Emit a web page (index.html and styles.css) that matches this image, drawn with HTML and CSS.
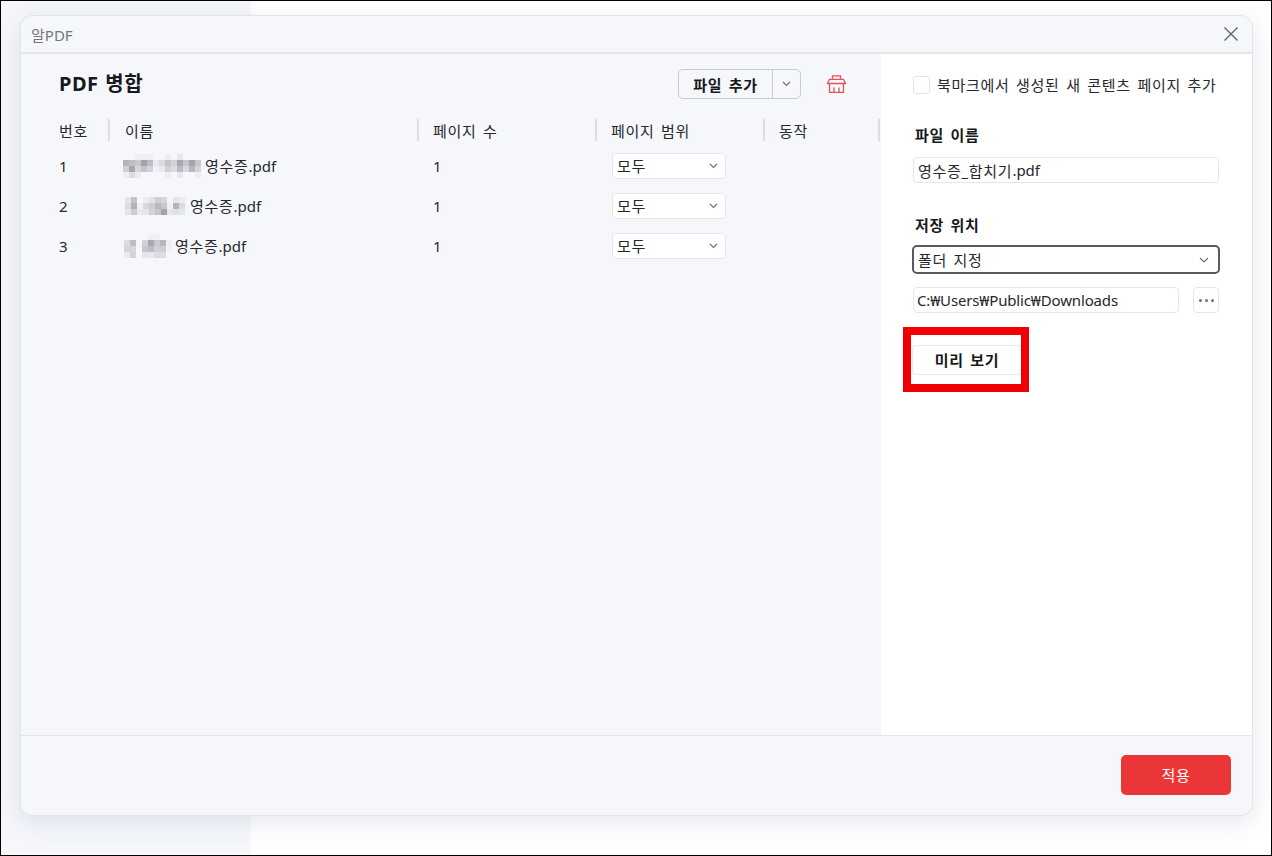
FILE: index.html
```html
<!DOCTYPE html>
<html lang="ko">
<head>
<meta charset="utf-8">
<title>알PDF</title>
<link rel="stylesheet" href="styles.css">
</head>
<body>
<div class="desktop">
  <div class="backdrop-side"></div>
  <div class="backdrop-main"></div>
  <div class="dialog">
    <header class="titlebar">
      <span class="app-name">알PDF</span>
      <svg class="close" width="16" height="16" viewBox="0 0 16 16"><path d="M1.5 1.5l13 13M14.5 1.5l-13 13"/></svg>
    </header>
    <div class="content">
      <section class="left">
        <div class="left-head">
          <h1>PDF 병합</h1>
          <div class="split">
            <button class="split-main ko">파일 추가</button>
            <span class="split-arrow"><svg class="chev" width="9" height="6" viewBox="0 0 9 6"><path d="M1 1l3.5 3.5L8 1"/></svg></span>
          </div>
          <svg class="trash" width="19" height="18" viewBox="0 0 19 18"><path d="M5.500 4.300V.8h8v3.500M2.500 4.300h14l2 4.200H.5zM2.500 8.500v8.800h14V8.500M7 12.500v4.800M12 12.500v4.800"/></svg>
        </div>
        <div class="grid grid-head ko">
          <div class="cell first">번호</div>
          <div class="cell second">이름</div>
          <div class="cell">페이지 수</div>
          <div class="cell">페이지 범위</div>
          <div class="cell">동작</div>
        </div>
        <div class="grid row">
          <div class="cell first">1</div>
          <div class="cell name">
            <svg class="mosaic m1" width="78" height="24" viewBox="0 0 13 4" shape-rendering="crispEdges">
              <rect x="2" y="0" width="3" height="1" fill="#eef0f4"/><rect x="7" y="0" width="1" height="1" fill="#eceef2"/><rect x="9" y="0" width="1" height="1" fill="#e6e8ec"/>
              <rect x="0" y="1" width="1" height="1" fill="#b3b3b8"/><rect x="1" y="1" width="1" height="1" fill="#bdbdc2"/><rect x="2" y="1" width="1" height="1" fill="#c8c8cf"/><rect x="3" y="1" width="1" height="1" fill="#a3a3a9"/><rect x="4" y="1" width="1" height="1" fill="#bcbcc6"/><rect x="5" y="1" width="1" height="1" fill="#e8e8ee"/><rect x="6" y="1" width="1" height="1" fill="#d7dbe2"/><rect x="7" y="1" width="1" height="1" fill="#c4c4cc"/><rect x="8" y="1" width="1" height="1" fill="#d0d0d8"/><rect x="9" y="1" width="1" height="1" fill="#a9a7b5"/><rect x="10" y="1" width="1" height="1" fill="#c6c4cf"/><rect x="11" y="1" width="1" height="1" fill="#a5a5a8"/><rect x="12" y="1" width="1" height="1" fill="#c8c8cc"/>
              <rect x="0" y="2" width="1" height="1" fill="#d0d0d4"/><rect x="1" y="2" width="1" height="1" fill="#a9a9ac"/><rect x="2" y="2" width="1" height="1" fill="#d5d5dc"/><rect x="3" y="2" width="1" height="1" fill="#c5c5cf"/><rect x="4" y="2" width="1" height="1" fill="#d2d2dc"/><rect x="5" y="2" width="1" height="1" fill="#f0f0f5"/><rect x="6" y="2" width="1" height="1" fill="#e8e8ee"/><rect x="7" y="2" width="1" height="1" fill="#cfcfd6"/><rect x="8" y="2" width="1" height="1" fill="#dcdce0"/><rect x="9" y="2" width="1" height="1" fill="#bdbbc5"/><rect x="10" y="2" width="1" height="1" fill="#d8d6de"/><rect x="11" y="2" width="1" height="1" fill="#b8b8bc"/><rect x="12" y="2" width="1" height="1" fill="#d5d5d8"/>
              <rect x="0" y="3" width="1" height="1" fill="#eceef0"/><rect x="1" y="3" width="1" height="1" fill="#dddde0"/><rect x="2" y="3" width="1" height="1" fill="#ebebee"/><rect x="7" y="3" width="1" height="1" fill="#eeeef2"/><rect x="9" y="3" width="1" height="1" fill="#e8e8ec"/><rect x="12" y="3" width="1" height="1" fill="#eeeef0"/>
            </svg>
            <span class="file"><span class="ko">영수증</span>.pdf</span>
          </div>
          <div class="cell">1</div>
          <div class="cell"><div class="mini-select ko"><span>모두</span><svg class="chev" width="9" height="6" viewBox="0 0 9 6"><path d="M1 1l3.500 3.500L8 1"/></svg></div></div>
          <div class="cell"></div>
        </div>
        <div class="grid row">
          <div class="cell first">2</div>
          <div class="cell name">
            <svg class="mosaic m2" width="60" height="18" viewBox="0 0 10 3" shape-rendering="crispEdges">
              <rect x="0" y="0" width="1" height="1" fill="#e4e5e8"/><rect x="1" y="0" width="1" height="1" fill="#c4c4c8"/><rect x="3" y="0" width="1" height="1" fill="#eeeef2"/><rect x="4" y="0" width="1" height="1" fill="#e2e2e6"/><rect x="5" y="0" width="1" height="1" fill="#cfcdd2"/><rect x="6" y="0" width="1" height="1" fill="#d8d6da"/><rect x="8" y="0" width="1" height="1" fill="#e4e6ea"/><rect x="9" y="0" width="1" height="1" fill="#e8ecf0"/>
              <rect x="0" y="1" width="1" height="1" fill="#dcdce0"/><rect x="1" y="1" width="1" height="1" fill="#b2b2b6"/><rect x="2" y="1" width="1" height="1" fill="#eff0f3"/><rect x="3" y="1" width="1" height="1" fill="#d8d8de"/><rect x="4" y="1" width="1" height="1" fill="#cdcdd3"/><rect x="5" y="1" width="1" height="1" fill="#bdb8bc"/><rect x="6" y="1" width="1" height="1" fill="#cac6ca"/><rect x="7" y="1" width="1" height="1" fill="#f0f1f4"/><rect x="8" y="1" width="1" height="1" fill="#b8b5b4"/><rect x="9" y="1" width="1" height="1" fill="#d5dde4"/>
              <rect x="0" y="2" width="1" height="1" fill="#e6e6ea"/><rect x="1" y="2" width="1" height="1" fill="#cdcdd0"/><rect x="2" y="2" width="1" height="1" fill="#eaeaee"/><rect x="3" y="2" width="1" height="1" fill="#e4e6ea"/><rect x="4" y="2" width="1" height="1" fill="#d2d2d8"/><rect x="5" y="2" width="1" height="1" fill="#c6c4cc"/><rect x="6" y="2" width="1" height="1" fill="#a8a2a8"/><rect x="7" y="2" width="1" height="1" fill="#e4e6ea"/><rect x="8" y="2" width="1" height="1" fill="#dee2e6"/><rect x="9" y="2" width="1" height="1" fill="#e4e8ec"/>
            </svg>
            <span class="file"><span class="ko">영수증</span>.pdf</span>
          </div>
          <div class="cell">1</div>
          <div class="cell"><div class="mini-select ko"><span>모두</span><svg class="chev" width="9" height="6" viewBox="0 0 9 6"><path d="M1 1l3.500 3.500L8 1"/></svg></div></div>
          <div class="cell"></div>
        </div>
        <div class="grid row">
          <div class="cell first">3</div>
          <div class="cell name">
            <svg class="mosaic m3" width="48" height="24" viewBox="0 0 8 4" shape-rendering="crispEdges">
              <rect x="4" y="0" width="1" height="1" fill="#eef0f4"/><rect x="5" y="0" width="1" height="1" fill="#f0f1f5"/>
              <rect x="0" y="1" width="1" height="1" fill="#dcdce0"/><rect x="1" y="1" width="1" height="1" fill="#bdbdc2"/><rect x="3" y="1" width="1" height="1" fill="#d0d0d6"/><rect x="4" y="1" width="1" height="1" fill="#a8a8b6"/><rect x="5" y="1" width="1" height="1" fill="#c8c8cf"/><rect x="6" y="1" width="1" height="1" fill="#bcb4ba"/><rect x="7" y="1" width="1" height="1" fill="#eaf0f4"/>
              <rect x="0" y="2" width="1" height="1" fill="#d6d6da"/><rect x="1" y="2" width="1" height="1" fill="#d8d8dc"/><rect x="3" y="2" width="1" height="1" fill="#c6c6cc"/><rect x="4" y="2" width="1" height="1" fill="#bcbcc4"/><rect x="5" y="2" width="1" height="1" fill="#cfcfd4"/><rect x="6" y="2" width="1" height="1" fill="#cfcbd0"/><rect x="7" y="2" width="1" height="1" fill="#eef2f6"/>
              <rect x="0" y="3" width="1" height="1" fill="#eaeaee"/><rect x="1" y="3" width="1" height="1" fill="#d4d4d8"/><rect x="3" y="3" width="1" height="1" fill="#e6e6ea"/><rect x="4" y="3" width="1" height="1" fill="#e8e8ec"/><rect x="5" y="3" width="1" height="1" fill="#dcdce0"/><rect x="6" y="3" width="1" height="1" fill="#dedee2"/>
            </svg>
            <span class="file"><span class="ko">영수증</span>.pdf</span>
          </div>
          <div class="cell">1</div>
          <div class="cell"><div class="mini-select ko"><span>모두</span><svg class="chev" width="9" height="6" viewBox="0 0 9 6"><path d="M1 1l3.500 3.500L8 1"/></svg></div></div>
          <div class="cell"></div>
        </div>
      </section>
      <aside class="right">
        <label class="check ko"><span class="box"></span><span class="check-text">북마크에서 생성된 새 콘텐츠 페이지 추가</span></label>
        <h2 class="label-name ko">파일 이름</h2>
        <div class="field"><span class="ko">영수증_합치기</span>.pdf</div>
        <h2 class="label-save ko">저장 위치</h2>
        <div class="folder-select ko"><span>폴더 지정</span><svg class="chev" width="10" height="6" viewBox="0 0 10 6"><path d="M1 1l4 4 4-4"/></svg></div>
        <div class="path-row">
          <div class="field path">C:₩Users₩Public₩Downloads</div>
          <button class="more"><i></i><i></i><i></i></button>
        </div>
        <div class="preview-wrap">
          <button class="preview ko">미리 보기</button>
          <div class="annotation"></div>
        </div>
      </aside>
    </div>
    <footer class="footer"><button class="apply ko">적용</button></footer>
  </div>
</div>
</body>
</html>
```
FILE: styles.css
```css
* { box-sizing: border-box; }
html, body { margin: 0; height: 100%; }
body {
  font-family: "Noto Sans", "Noto Sans CJK KR", sans-serif;
  font-size: 15px;
  color: #26282c;
  overflow: hidden;
}
button { font: inherit; color: inherit; cursor: pointer; }
.ko { letter-spacing: .7px; word-spacing: 2px; }
.desktop {
  position: relative;
  height: 856px;
  display: flex;
  border: 1px solid #000;
  overflow: hidden;
}
.backdrop-side { width: 250px; background: #f5f7fb; }
.backdrop-main { flex: 1; background: #fff; }
.dialog {
  position: absolute;
  left: 19px;
  top: 14px;
  width: 1233px;
  height: 801px;
  display: flex;
  flex-direction: column;
  background: #f5f7fb;
  border: 1px solid #e2e4ea;
  border-radius: 12px;
  box-shadow: 0 6px 24px rgba(70, 85, 120, .14);
  overflow: hidden;
}
.titlebar {
  height: 38px;
  flex: none;
  display: flex;
  align-items: center;
  justify-content: space-between;
  padding: 0 13px 0 10px;
  border-bottom: 2px solid #e4e6ec;
}
.app-name { color: #73767d; }
.close path { fill: none; stroke: #5f6470; stroke-width: 1.4; }
.content { flex: 1; display: flex; min-height: 0; }
.left { width: 860px; padding: 15px 0 0 38px; }
.left-head { display: flex; align-items: center; height: 30px; margin-bottom: 20px; }
h1 { margin: 0 0 4px; font-size: 20px; font-weight: 700; color: #17191d; flex: 1; letter-spacing: .5px; word-spacing: 1px; }
.split {
  width: 123px;
  height: 30px;
  display: flex;
  border: 1px solid #c6cad9;
  border-radius: 5px;
}
.split-main {
  flex: 1;
  border: 0;
  border-right: 1px solid #c6cad9;
  background: none;
  padding: 0;
  font-weight: 700;
  color: #17191d;
}
.split-arrow { width: 27px; display: flex; align-items: center; justify-content: center; }
.chev path { fill: none; stroke: #6e7178; stroke-width: 1.2; }
.trash { margin: 0 35px 0 26px; }
.trash path { fill: none; stroke: #e0545a; stroke-width: 1.300; }
.grid { display: grid; grid-template-columns: 51px 309px 178px 168px 115px; }
.grid-head { height: 22px; margin-bottom: 5px; }
.grid-head .cell { border-right: 2px solid #dcdee4; }
.cell { display: flex; align-items: center; padding-left: 14px; white-space: nowrap; }
.cell.first { padding-left: 0; }
.cell.second { padding-left: 15px; }
.row { height: 40px; }
.name { padding-left: 15px; gap: 4px; }
.file { margin-bottom: 2px; }
.m1 { margin-left: -2px; }
.m2 { margin-right: 1px; }
.m3 { margin: 0 -1px 0 -1px; }
.mini-select {
  width: 114px;
  height: 26px;
  margin-left: 1px;
  background: #fff;
  border: 1px solid #e4e6ec;
  border-radius: 4px;
  display: flex;
  align-items: center;
  justify-content: space-between;
  padding: 0 7px 0 4px;
}
.mini-select span { margin-bottom: 2px; }
.right { width: 371px; background: #fff; padding: 0 32px 0 32px; position: relative; }
.check { display: flex; align-items: center; gap: 7px; height: 18px; margin-top: 22px; white-space: nowrap; }
.check-text { margin-bottom: 2px; }
.box { width: 17px; height: 18px; border: 1px solid #e2e4ea; border-radius: 3px; }
h2 { margin: 0; font-size: 15px; font-weight: 700; color: #17191d; padding-left: 2px; }
.label-name { margin-top: 31px; height: 20px; line-height: 20px; }
.label-save { margin-top: 32px; height: 20px; line-height: 20px; }
.field {
  width: 306px;
  height: 26px;
  margin-top: 12px;
  border: 1px solid #e4e6ec;
  border-radius: 4px;
  padding-left: 4px;
  display: flex;
  align-items: center;
  white-space: nowrap;
}
.folder-select {
  width: 308px;
  height: 29px;
  margin: 10px 0 0 -1px;
  border: 2px solid #575a61;
  border-radius: 5px;
  display: flex;
  align-items: center;
  justify-content: space-between;
  padding: 0 9px 0 4px;
}
.path-row { display: flex; gap: 14px; margin-top: 13px; }
.path { width: 266px; margin-top: 0; letter-spacing: -.15px; padding-left: 3px; }
.more {
  width: 26px;
  height: 26px;
  padding: 0;
  background: #fff;
  border: 1px solid #e4e6ec;
  border-radius: 4px;
  display: flex;
  align-items: center;
  justify-content: center;
  gap: 3px;
}
.more i { width: 3px; height: 3px; border-radius: 50%; background: #6e7178; }
.preview-wrap { position: relative; margin: 32px 0 0 -1px; }
.preview {
  display: block;
  width: 110px;
  height: 30px;
  padding: 0 0 2px;
  background: #fff;
  border: 1px solid #e6e8ee;
  border-radius: 4px;
  font-weight: 700;
  color: #17191d;
}
.annotation {
  position: absolute;
  left: -9px;
  top: -18px;
  width: 126px;
  height: 65px;
  border: 8px solid #f00000;
}
.footer {
  height: 80px;
  flex: none;
  border-top: 1px solid #e2e4ea;
  display: flex;
  align-items: center;
  justify-content: flex-end;
  padding: 0 21px 2px 0;
}
.apply {
  width: 110px;
  height: 40px;
  border: 0;
  border-radius: 5px;
  background: #ea3636;
  color: #fff;
}
```
